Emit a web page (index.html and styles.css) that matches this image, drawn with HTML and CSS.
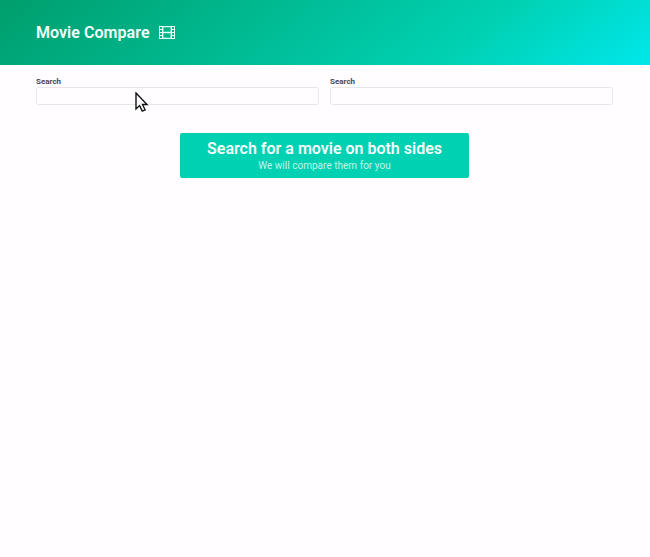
FILE: index.html
```html
<!DOCTYPE html>
<html lang="en">
<head>
<meta charset="utf-8">
<title>Movie Compare</title>
<link rel="stylesheet" href="styles.css">
</head>
<body>
<header class="hero">
  <h1 class="title">Movie Compare</h1>
  <svg class="film" width="16" height="13" viewBox="0 0 16 13" fill="none" stroke="currentColor">
    <path d="M3.7 .6h8.6v11.8H3.7zM3.7 6.5h8.6" stroke-width="1.4"/>
    <path d="M.5 0v13M15.5 0v13"/>
    <path d="M0 .5h4M0 3.5h4M0 6.5h4M0 9.5h4M0 12.5h4M12 .5h4M12 3.5h4M12 6.5h4M12 9.5h4M12 12.5h4"/>
  </svg>
</header>
<main class="container">
  <div class="columns">
    <div class="column"><label class="label" for="left">Search</label><input class="input" id="left"></div>
    <div class="column"><label class="label" for="right">Search</label><input class="input" id="right"></div>
  </div>
  <section class="notification">
    <h2 class="heading">Search for a movie on both sides</h2>
    <p class="subtitle">We will compare them for you</p>
  </section>
</main>
<svg class="cursor" width="14" height="21" viewBox="0 0 14 21">
  <path d="M1 1v16l3.6-3.4 2.7 5.5 2.8-1.3-2.6-5.3H12z" fill="#fff" stroke="#111" stroke-width="1.4"/>
</svg>
</body>
</html>
```
FILE: styles.css
```css
* { box-sizing: border-box; }
body {
  margin: 0;
  min-height: 557px;
  background: #fffdff;
  color: #4a484b;
  font-family: Roboto, sans-serif;
}
h1, h2, p { margin: 0; }
.hero {
  display: flex;
  align-items: center;
  gap: 9px;
  height: 65px;
  padding: 0 36px;
  color: #f4fffc;
  background: linear-gradient(141deg, #009e6c 0%, #00d1b2 71%, #00e7eb 100%);
}
.title { font-size: 16px; line-height: 18px; font-weight: 600; letter-spacing: .05px; }
.film { color: #e6fff8; }
.container { padding: 12px 37px 0 36px; }
.columns { display: grid; grid-template-columns: 1fr 1fr; gap: 11px; }
.label { display: block; font-size: 8px; line-height: 10px; font-weight: 700; }
.input {
  display: block;
  width: 100%;
  height: 18px;
  padding: 0 5px;
  border: 1px solid #e8e6ea;
  border-radius: 2.5px;
  background: #fffdff;
  font: inherit;
  font-size: 9px;
  outline: none;
}
.notification {
  width: 288.5px;
  height: 44.5px;
  margin: 28px auto 0;
  padding-top: 6px;
  border-radius: 2px;
  background: #00d1b2;
  color: #f4fffc;
  text-align: center;
}
.heading { font-size: 16px; line-height: 20px; font-weight: 600; }
.subtitle { font-size: 10px; line-height: 13px; color: #c4f5ea; letter-spacing: .02px; }
.cursor { position: absolute; left: 134.5px; top: 92px; }
```
